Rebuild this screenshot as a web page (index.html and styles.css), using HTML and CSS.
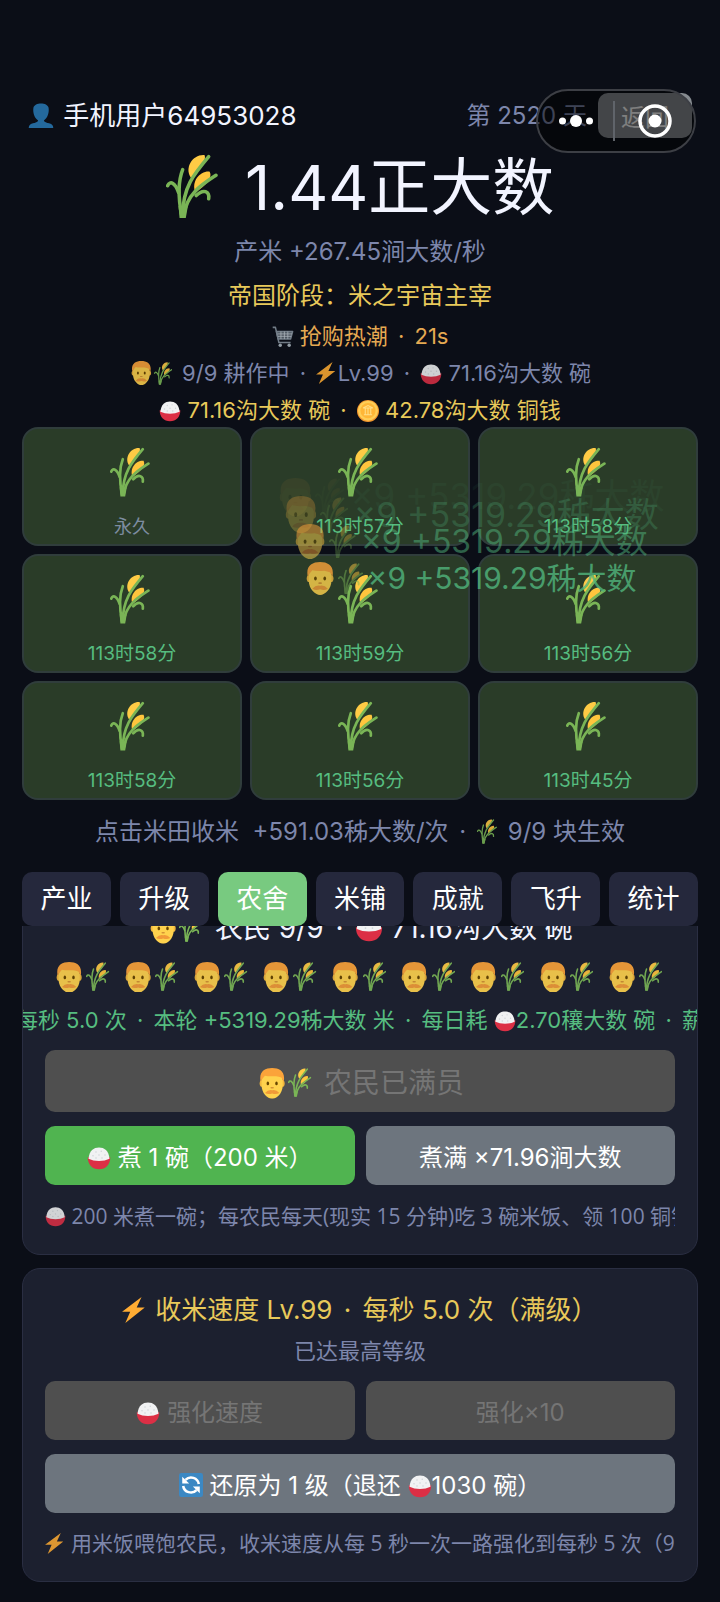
FILE: index.html
```html
<!DOCTYPE html>
<html lang="zh-CN">
<head>
<meta charset="utf-8">
<meta name="viewport" content="width=device-width, initial-scale=1">
<title>米之帝国</title>
<link rel="stylesheet" href="styles.css">
</head>
<body>
<svg class="sprite" aria-hidden="true">
  <symbol id="user" viewBox="0 0 36 36"><path fill="#24699d" d="M5 34.500C5 28 13 29.500 14 25.500C8.500 22 6.500 14 7.500 8C9 0 27 0 28.500 8C29.500 14 27.500 22 22 25.500C23 29.500 31 28 31 34.500Z"/><path fill="#24699d" d="M1 36Q1 29.500 9 29H27Q35 29.500 35 36Z"/></symbol>
  <symbol id="wheat" viewBox="0 0 50 62"><path fill="#ffcb45" d="M24 23C17 13 26 0 37 1Q40 8 24 23Z"/><path fill="#ffc53d" d="M28 37C24 26 33 16 42 17Q46 25 28 37Z"/><g fill="none" stroke="#7ab556" stroke-width="3.400" stroke-linecap="round"><path d="M15 59C11 38 12 25 16 15"/><path d="M12 37C9 28 4 25 1.500 30.500"/><path d="M16 59C16 32 27 19 41 2.500"/><path d="M17 59C20 38 35 29 48 20.500"/><path d="M29 40C36 33 42 36 41 43"/></g><path fill="#7ab556" d="M12 50L13 61.500H19L21 50Z"/></symbol>
  <symbol id="face" viewBox="0 0 26 32"><ellipse cx="2.500" cy="16" rx="2.500" ry="3.500" fill="#f0b63d"/><ellipse cx="23.500" cy="16" rx="2.500" ry="3.500" fill="#f0b63d"/><path fill="#ffd24d" d="M2 12C2 -1 24 -1 24 12V18C24 26 18 32 13 32S2 26 2 18Z"/><path fill="#fba33a" d="M1 14C-1 4 5 0 13 0S27 4 25 14L22.500 10Q20 9 17 8.500Q9 9 5.500 8Q3.500 10 1 14Z"/><ellipse cx="8.500" cy="16" rx="1.300" ry="2" fill="#664500"/><ellipse cx="17.500" cy="16" rx="1.300" ry="2" fill="#664500"/><path fill="none" stroke="#d69435" stroke-width="1.500" stroke-linecap="round" d="M12 20.500H14"/><path fill="#f19a38" d="M5.500 26Q9 22 13 23Q17 22 20.500 26Q17 28 13 26.500Q9 28 5.500 26Z"/></symbol>
  <symbol id="bowl" viewBox="0 0 32 32"><path fill="#dc2f45" d="M1 15C1 25 7 31 16 31S31 25 31 15Z"/><path fill="#f1f2f3" d="M2 17C3 6 9 2 16 2S29 6 30 17Q24 20 16 20T2 17Z"/><g fill="#cfd4d8"><circle cx="12" cy="8" r="1"/><circle cx="19" cy="7" r="1"/><circle cx="8" cy="13" r="1"/><circle cx="16" cy="12" r="1"/><circle cx="24" cy="12" r="1"/><circle cx="20" cy="16" r="1"/><circle cx="12" cy="16" r="1"/></g></symbol>
  <symbol id="bolt" viewBox="0 0 28 32"><path fill="#ffac33" d="M24 0L0 18H10L4 32L28 13H18Z"/></symbol>
  <symbol id="coin" viewBox="0 0 32 32"><circle cx="16" cy="16" r="16" fill="#f2962f"/><circle cx="16" cy="15.500" r="14.500" fill="#ffce56"/><circle cx="16" cy="15.500" r="11" fill="#ffb636"/><path fill="none" stroke="#ffe08a" stroke-width="1.500" d="M9 11.500L16 8L23 11.500ZM10 21.500H22M12 12V21M16 12V21M20 12V21"/></symbol>
  <symbol id="cart" viewBox="0 0 32 32"><g fill="none" stroke="#84909b" stroke-width="2.200" stroke-linejoin="round"><path d="M1 2H5L10 24H27"/><path fill="#59636d" d="M6.500 8H30L27 19H9Z"/></g><path stroke="#c3ccd3" stroke-width="1.200" d="M8 11.500H29M8.500 15H28M13 8V19M18 8V19M23 8V19"/><circle cx="12" cy="28" r="2.500" fill="#aab5be"/><circle cx="25" cy="28" r="2.500" fill="#aab5be"/></symbol>
  <symbol id="reset" viewBox="0 0 26 26"><rect width="26" height="26" rx="2.500" fill="#3b88c3"/><g fill="none" stroke="#fff" stroke-width="2.800"><path d="M7 7.500A8.500 8.500 0 0 1 21.500 12"/><path d="M4.500 14A8.500 8.500 0 0 0 19 18.500"/></g><path fill="#fff" d="M3.500 4V11.500H11ZM22.500 22V14.500H15Z"/></symbol>
</svg>

<div class="capsule">
  <button class="capsule-part" aria-label="更多"><svg class="dots" viewBox="0 0 34 12"><g fill="#fff"><circle cx="3.500" cy="6" r="3.500"/><circle cx="17" cy="6" r="6"/><circle cx="30.500" cy="6" r="3.500"/></g></svg></button>
  <button class="capsule-part" aria-label="关闭"><svg class="target" viewBox="0 0 34 34"><circle cx="17" cy="17" r="15" fill="none" stroke="#fff" stroke-width="3.500"/><circle cx="17" cy="17" r="6.500" fill="#fff"/></svg></button>
</div>

<main class="game">
  <header class="top">
    <span class="user"><svg class="e-user"><use href="#user"/></svg> 手机用户64953028</span>
    <span class="day">第 2520 天</span>
    <button class="back">返回</button>
  </header>

  <h1 class="total"><svg class="e-wheat"><use href="#wheat"/></svg> <span>1.44正大数</span></h1>
  <p class="stat">产米 +267.45涧大数/秒</p>
  <p class="stat gold">帝国阶段：米之宇宙主宰</p>
  <p class="stat small orange"><svg class="e-bowl dim"><use href="#cart"/></svg> 抢购热潮 <span class="sep">·</span> 21s</p>
  <p class="stat small work"><svg class="e-face dim"><use href="#face"/></svg><svg class="e-wheat dim"><use href="#wheat"/></svg> 9/9 耕作中 <span class="sep">·</span> <svg class="e-bolt dim"><use href="#bolt"/></svg>Lv.99 <span class="sep">·</span> <svg class="e-bowl dim"><use href="#bowl"/></svg> 71.16沟大数 碗</p>
  <p class="stat small gold last"><svg class="e-bowl"><use href="#bowl"/></svg> 71.16沟大数 碗 <span class="sep">·</span> <svg class="e-bowl"><use href="#coin"/></svg> 42.78沟大数 铜钱</p>

  <section class="field">
    <button class="plot"><svg><use href="#wheat"/></svg><span class="forever">永久</span></button>
    <button class="plot"><svg><use href="#wheat"/></svg><span>113时57分</span></button>
    <button class="plot"><svg><use href="#wheat"/></svg><span>113时58分</span></button>
    <button class="plot"><svg><use href="#wheat"/></svg><span>113时58分</span></button>
    <button class="plot"><svg><use href="#wheat"/></svg><span>113时59分</span></button>
    <button class="plot"><svg><use href="#wheat"/></svg><span>113时56分</span></button>
    <button class="plot"><svg><use href="#wheat"/></svg><span>113时58分</span></button>
    <button class="plot"><svg><use href="#wheat"/></svg><span>113时56分</span></button>
    <button class="plot"><svg><use href="#wheat"/></svg><span>113时45分</span></button>
    <div class="gain gain-4"><svg class="e-face"><use href="#face"/></svg><svg class="e-wheat"><use href="#wheat"/></svg>×9 +5319.29秭大数</div>
    <div class="gain gain-3"><svg class="e-face"><use href="#face"/></svg><svg class="e-wheat"><use href="#wheat"/></svg>×9 +5319.29秭大数</div>
    <div class="gain gain-2"><svg class="e-face"><use href="#face"/></svg><svg class="e-wheat"><use href="#wheat"/></svg>×9 +5319.29秭大数</div>
    <div class="gain gain-1"><svg class="e-face"><use href="#face"/></svg><svg class="e-wheat"><use href="#wheat"/></svg>×9 +5319.29秭大数</div>
  </section>

  <p class="stat tip">点击米田收米&nbsp; +591.03秭大数/次 <span class="sep">·</span> <svg class="e-wheat dim"><use href="#wheat"/></svg> 9/9 块生效</p>

  <nav class="tabs">
    <button>产业</button><button>升级</button><button class="active">农舍</button><button>米铺</button><button>成就</button><button>飞升</button><button>统计</button>
  </nav>

  <div class="panel">
    <section class="card first">
      <h2 class="white"><svg class="e-face"><use href="#face"/></svg><svg class="e-wheat"><use href="#wheat"/></svg> 农民 9/9 <span class="sep">·</span> <svg class="e-bowl"><use href="#bowl"/></svg> 71.16沟大数 碗</h2>
      <div class="farmers">
        <span><svg class="e-face"><use href="#face"/></svg><svg class="e-wheat"><use href="#wheat"/></svg></span>
        <span><svg class="e-face"><use href="#face"/></svg><svg class="e-wheat"><use href="#wheat"/></svg></span>
        <span><svg class="e-face"><use href="#face"/></svg><svg class="e-wheat"><use href="#wheat"/></svg></span>
        <span><svg class="e-face"><use href="#face"/></svg><svg class="e-wheat"><use href="#wheat"/></svg></span>
        <span><svg class="e-face"><use href="#face"/></svg><svg class="e-wheat"><use href="#wheat"/></svg></span>
        <span><svg class="e-face"><use href="#face"/></svg><svg class="e-wheat"><use href="#wheat"/></svg></span>
        <span><svg class="e-face"><use href="#face"/></svg><svg class="e-wheat"><use href="#wheat"/></svg></span>
        <span><svg class="e-face"><use href="#face"/></svg><svg class="e-wheat"><use href="#wheat"/></svg></span>
        <span><svg class="e-face"><use href="#face"/></svg><svg class="e-wheat"><use href="#wheat"/></svg></span>
      </div>
      <div class="rate"><p>每秒 5.0 次 <span class="sep">·</span> 本轮 +5319.29秭大数 米 <span class="sep">·</span> 每日耗 <svg class="e-bowl"><use href="#bowl"/></svg>2.70穰大数 碗 <span class="sep">·</span> 薪</p></div>
      <button class="btn large" disabled><svg class="e-face"><use href="#face"/></svg><svg class="e-wheat"><use href="#wheat"/></svg> 农民已满员</button>
      <div class="pair">
        <button class="btn green"><svg class="e-bowl"><use href="#bowl"/></svg> 煮 1 碗（200 米）</button>
        <button class="btn">煮满 ×71.96涧大数</button>
      </div>
      <p class="hint"><svg class="e-bowl dim"><use href="#bowl"/></svg> 200 米煮一碗；每农民每天(现实 15 分钟)吃 3 碗米饭、领 100 铜钱</p>
    </section>

    <section class="card">
      <h2><svg class="e-bolt"><use href="#bolt"/></svg> 收米速度 Lv.99 <span class="sep">·</span> 每秒 5.0 次（满级）</h2>
      <p class="sub">已达最高等级</p>
      <div class="pair">
        <button class="btn" disabled><svg class="e-bowl"><use href="#bowl"/></svg> 强化速度</button>
        <button class="btn" disabled>强化×10</button>
      </div>
      <button class="btn"><svg class="e-reset"><use href="#reset"/></svg> 还原为 1 级（退还 <svg class="e-bowl"><use href="#bowl"/></svg>1030 碗）</button>
      <p class="hint"><svg class="e-bolt dim"><use href="#bolt"/></svg> 用米饭喂饱农民，收米速度从每 5 秒一次一路强化到每秒 5 次（99</p>
    </section>
  </div>
</main>
</body>
</html>
```
FILE: styles.css
```css
* { box-sizing: border-box; }
body {
  margin: 0;
  min-height: 100vh;
  background: #0b0e17;
  color: #f2f4ff;
  font-family: Inter, "Noto Sans CJK SC", sans-serif;
}
h1, h2, p { margin: 0; font-weight: 400; white-space: nowrap; }
button { font: inherit; color: inherit; border: 0; padding: 0; white-space: nowrap; }
.sprite { position: absolute; width: 0; height: 0; }

/* Inline pictograms scale with the surrounding text */
.e-user { width: 1em; height: 1em; vertical-align: -0.1em; margin-right: 2px; }
.e-wheat { width: 0.84em; height: 1.04em; vertical-align: -0.16em; margin-right: 0.16em; }
.e-face { width: 0.94em; height: 1.1em; vertical-align: -0.2em; margin: 0 0.1em; }
.e-bowl { width: 1em; height: 1em; vertical-align: -0.16em; }
.e-bolt { width: 0.88em; height: 1em; vertical-align: -0.14em; margin-right: 0.1em; }
.e-reset { width: 1em; height: 1em; vertical-align: -0.14em; }
.dim { opacity: 0.85; }
.sep { margin: 0 4px; }

.game { padding: 93px 22px 20px; }

.top { display: flex; align-items: center; height: 45px; padding: 0 6px; font-size: 26px; }
.user { flex: 1; padding-bottom: 4px; }
.day { padding-bottom: 4px; color: #7d86ab; font-size: 24px; }
.back { width: 94px; height: 45px; margin-left: 11px; border-radius: 10px; background: #868b90; color: #fff; font-size: 24px; }

.capsule {
  position: absolute;
  z-index: 5;
  top: 89px;
  right: 24px;
  display: flex;
  width: 160px;
  height: 64px;
  border: 2px solid #3d3f45;
  border-radius: 32px;
  background: rgba(0, 0, 0, 0.5);
}
.capsule-part { flex: 1; display: flex; align-items: center; justify-content: center; background: none; }
.capsule-part + .capsule-part::before { content: ""; width: 2px; height: 40px; margin-right: 23px; background: #60646a; }
.dots { width: 34px; height: 12px; }
.target { width: 34px; height: 34px; margin-right: 22px; }

.total { margin: 12px 0 4px; font-size: 62px; line-height: 76px; text-align: center; }
.total .e-wheat { vertical-align: -8px; }

.stat { font-size: 24px; line-height: 44px; text-align: center; color: #7d86ab; }
.small { font-size: 22px; line-height: 36px; }
.work { line-height: 39px; }
.last { line-height: 34px; }
.gold { color: #e8c95a; }
.orange { color: #e5a952; }

.field { position: relative; display: grid; grid-template-columns: repeat(3, 1fr); gap: 8px; }
.plot {
  display: flex;
  flex-direction: column;
  align-items: center;
  height: 119px;
  padding-top: 18px;
  border: 2px solid #303d3c;
  border-radius: 16px;
  background: #2a3c28;
  color: #56bd80;
  font-size: 19px;
  line-height: 28px;
}
.plot svg { width: 40px; height: 50px; margin: 0 4px 16px 0; }
.forever { color: #7d8ca0; font-size: 18px; }

/* Rising harvest numbers */
.gain { position: absolute; left: 220px; right: 0; text-align: center; white-space: nowrap; color: #50b47c; line-height: 40px; pointer-events: none; }
.gain .e-wheat { opacity: 0.6; }
.gain-1 { top: 131px; font-size: 30px; opacity: 0.8; }
.gain-2 { top: 95px; font-size: 32px; opacity: 0.5; }
.gain-3 { top: 68px; font-size: 34px; opacity: 0.25; }
.gain-4 { top: 49px; font-size: 35px; opacity: 0.06; }

.tip { padding: 10px 0 18px; }

.tabs { display: grid; grid-template-columns: repeat(7, 1fr); gap: 9px; }
.tabs button { height: 54px; padding-bottom: 5px; border-radius: 10px; background: #25283c; color: #fff; font-size: 26px; }
.tabs .active { background: #78ca80; }

.panel { overflow: hidden; display: flex; flex-direction: column; gap: 13px; }
.card { padding: 21px 22px; border: 1px solid #2a2e42; border-radius: 18px; background: #1c202f; overflow: hidden; }
.first { margin-top: -40px; }
.card h2 { font-size: 26px; line-height: 40px; text-align: center; color: #e8c95a; }
.card .white { font-size: 28px; color: #f2f4ff; }
.farmers { display: flex; justify-content: center; gap: 8px; margin-top: 10px; font-size: 28px; opacity: 0.9; }
.farmers span { display: flex; align-items: center; height: 38px; }
.farmers .e-face { margin-right: 4px; }
.rate { display: flex; justify-content: center; margin: 4px -22px 10px; font-size: 22px; line-height: 40px; color: #56bd80; }
.sub { margin: 3px 0 12px; font-size: 22px; line-height: 36px; text-align: center; color: #7d86ab; }
.pair { display: grid; grid-template-columns: 1fr 1fr; gap: 11px; margin-bottom: 14px; }
.btn { width: 100%; height: 59px; border-radius: 10px; background: #6d757e; color: #fff; font-size: 24px; }
.btn:disabled { background: #4f4f4f; color: #757575; }
.large { height: 62px; margin-bottom: 14px; font-size: 28px; }
.green { background: #50b450; }
.hint { margin-top: 13px; overflow: hidden; font-family: "Open Sans", "Noto Sans CJK SC", sans-serif; font-size: 21px; line-height: 34px; color: #7d86ab; }
```
